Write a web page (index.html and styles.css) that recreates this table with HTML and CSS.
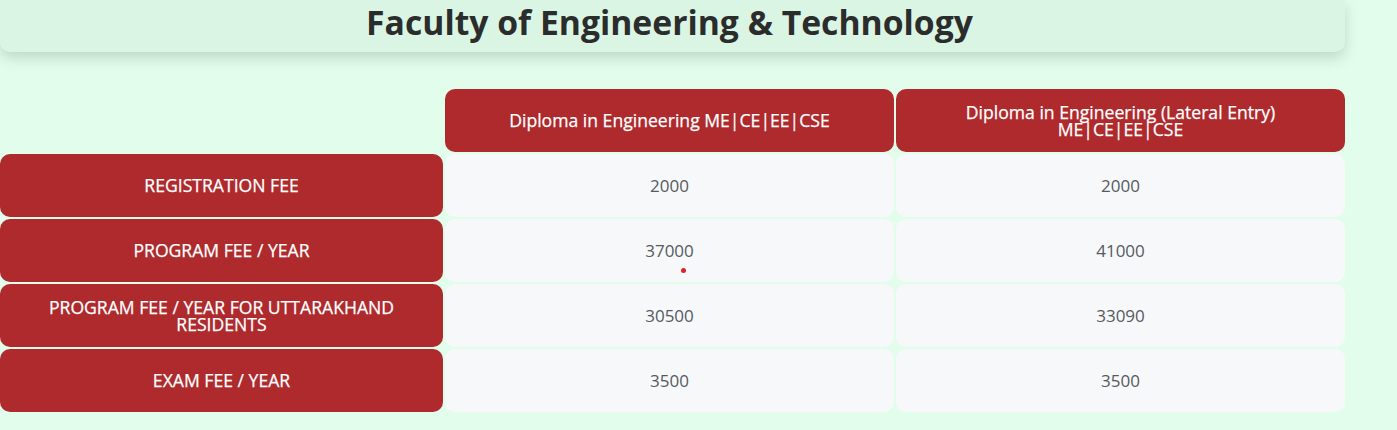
FILE: index.html
```html
<!DOCTYPE html>
<html lang="en">
<head>
<meta charset="utf-8">
<title>Faculty of Engineering &amp; Technology</title>
<link rel="stylesheet" href="styles.css">
</head>
<body>
<div class="page">
  <header class="title-card">
    <h1 class="title">Faculty of Engineering &amp; Technology</h1>
  </header>
  <div class="fee-grid">
    <div class="blank"></div>
    <div class="cell head">Diploma in Engineering ME|CE|EE|CSE</div>
    <div class="cell head">Diploma in Engineering (Lateral Entry)<br>ME|CE|EE|CSE</div>

    <div class="cell label">REGISTRATION FEE</div>
    <div class="cell value">2000</div>
    <div class="cell value">2000</div>

    <div class="cell label">PROGRAM FEE / YEAR</div>
    <div class="cell value dot-host">37000<span class="dot"></span></div>
    <div class="cell value">41000</div>

    <div class="cell label">PROGRAM FEE / YEAR FOR UTTARAKHAND<br>RESIDENTS</div>
    <div class="cell value">30500</div>
    <div class="cell value">33090</div>

    <div class="cell label">EXAM FEE / YEAR</div>
    <div class="cell value">3500</div>
    <div class="cell value">3500</div>
  </div>
</div>
</body>
</html>
```
FILE: styles.css
```css
html, body {
  margin: 0;
  padding: 0;
  background: #e3fdec;
  font-family: "Open Sans", "Noto Sans", sans-serif;
}
.page {
  width: 1345px;
}
.title-card {
  height: 52px;
  background: #dbf5e5;
  border-radius: 0 0 10px 10px;
  box-shadow: 0 6px 14px rgba(60, 90, 70, 0.22);
  display: flex;
  justify-content: center;
}
.title {
  margin: 0;
  font-size: 33.7px;
  line-height: 44px;
  font-weight: 700;
  color: #2b2d2c;
  position: relative;
  left: -3px;
}
.fee-grid {
  margin-top: 37px;
  display: grid;
  grid-template-columns: 443px 449px 449px;
  grid-auto-rows: 63px;
  gap: 2px;
}
.cell {
  border-radius: 10px;
  display: flex;
  align-items: center;
  justify-content: center;
  text-align: center;
  font-size: 17.6px;
  line-height: 17px;
}
.head, .label {
  background: #ae2a2d;
  color: #ffffff;
  font-weight: 400;
  -webkit-text-stroke: 0.25px #ffffff;
}
.value {
  background: #f7f8fa;
  color: #555a5e;
  font-size: 17px;
}
.dot-host {
  position: relative;
}
.dot {
  position: absolute;
  left: 236px;
  top: 49px;
  width: 5px;
  height: 5px;
  border-radius: 50%;
  background: #e32028;
}
```
